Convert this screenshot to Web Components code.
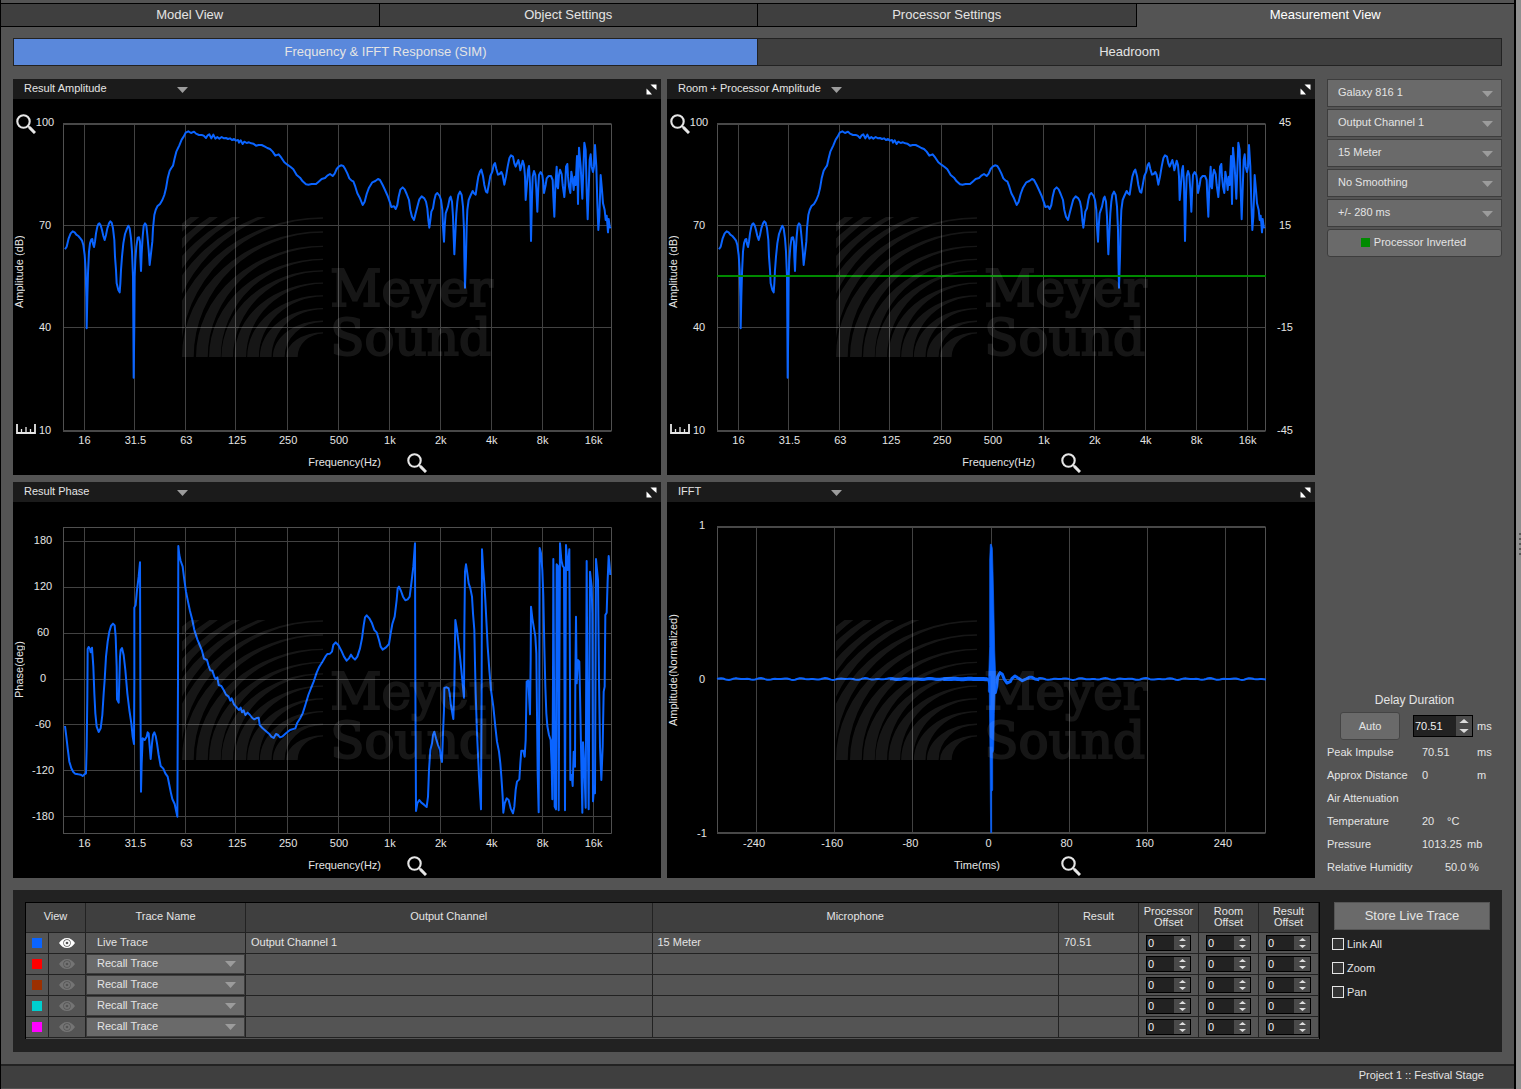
<!DOCTYPE html>
<html lang="en">
<head>
<meta charset="utf-8">
<title>Measurement View</title>
<style>
    html, body {
        margin: 0;
        height: 100%;
        background: #545454;
    }

    body {
        font: 11px/14px "Liberation Sans", Arial, sans-serif;
        color: #e4e4e4;
    }
</style>
</head>
<body>
<measurement-app></measurement-app>

<script>
const ICONS = {
    zoom: `<svg width="20" height="20" viewBox="0 0 20 20" fill="none" stroke="#e6e6e6">
        <circle cx="7.500" cy="7.500" r="6.200" stroke-width="2.100"/>
        <path d="M12 12L14 14" stroke-width="1.800"/><path d="M13.400 13.400L19 19" stroke-width="3"/></svg>`,
    ruler: `<svg width="20" height="10" viewBox="0 0 20 10" fill="none" stroke="#e6e6e6">
        <path d="M1 0V9H19V0" stroke-width="1.800"/><path d="M5.500 5V9M10 3V9M14.500 5V9" stroke-width="1.300"/></svg>`,
    expand: `<svg width="11" height="11" viewBox="0 0 11 11" fill="#fff">
        <path d="M4.500 .5H10.500V6L8.500 4.300L6.800 2.800Z"/><path d="M.5 4.500V10.500H6L4.300 8.500L2.800 6.800Z"/></svg>`,
    eye: `<svg width="16" height="10" viewBox="0 0 16 10">
        <path fill="currentColor" fill-rule="evenodd" d="M0 5C2 2 4.600 0 8 0S14 2 16 5C14 8 11.400 10 8 10S2 8 0 5ZM8 1.300A3.700 3.700 0 1 0 8 8.700A3.700 3.700 0 1 0 8 1.300Z"/>
        <circle cx="8" cy="5" r="2.200" fill="none" stroke="currentColor" stroke-width="1.700"/></svg>`
};

// Traces are stored at three units per pixel, in two halves joined at x = split
const AMPLITUDE = {
    split: 990,
    left: `195,538 200,530 206,505 212,490 218,484 224,487 229,494 235,498 241,505 246,512 250,525 254,555 257,600 259,680 260,775
        262,680 264,610 267,545 270,520 274,508 277,507 279,522 282,531 285,515 288,490 292,470 295,462 298,460 302,466 306,480
        310,498 314,510 318,495 322,475 327,460 331,454 335,458 339,475 343,510 345,560 348,600 350,640 355,660 359,667 361,640
        363,600 366,560 370,520 375,492 381,476 385,467 389,475 393,505 396,545 399,620 400,760 401,923 403,760 404,620 406,570
        409,530 413,503 417,502 420,515 421,560 423,603 425,550 428,500 431,468 435,460 439,466 442,495 446,540 449,585 453,550
        457,515 459,475 463,435 467,420 472,409 480,402 487,390 493,375 498,355 503,325 509,302 514,294 519,287 524,265 529,245
        538,226 545,209 551,200 557,188 565,184 573,189 582,185 588,191 597,195 605,195 611,197 618,204 623,196 628,193 634,205
        640,194 646,206 652,201 658,206 665,201 672,205 678,204 684,207 690,205 696,210 702,207 708,212 714,210 717,218 722,211
        728,222 733,215 740,219 747,217 754,220 760,221 768,227 776,225 785,225 795,230 802,234 810,237 818,245 826,257 836,253
        844,263 853,277 862,284 872,291 880,298 890,315 900,323 908,334 918,343 925,344 935,342 948,342 956,335 965,327 975,324
        982,317`,
    right: `0,312 8,318 14,311 20,297 26,290 33,286 40,288 46,298 52,310 58,325 65,332 70,334 76,350 82,370 90,385 98,405 104,395
        110,372 117,353 127,337 136,333 144,327 150,330 158,345 165,360 173,378 180,398 184,411 192,409 197,417 202,405 206,380
        211,359 218,352 224,358 230,372 237,390 241,420 246,440 252,450 257,430 262,410 268,388 275,379 283,385 288,395 292,415
        295,450 298,473 301,450 304,425 309,415 313,390 317,374 322,369 329,378 333,390 337,420 339,470 342,515 344,470 347,430
        354,410 359,385 362,380 366,395 369,440 371,500 373,553 376,490 379,430 382,395 385,375 390,365 395,375 399,410 402,480
        403,560 405,653 408,560 410,470 412,420 416,390 421,378 428,363 432,370 437,374 441,345 445,320 450,305 454,299 459,318
        463,345 468,365 472,368 477,340 481,318 487,305 491,285 495,279 499,297 504,314 509,312 514,306 518,315 523,344 528,320
        533,290 538,265 543,256 549,260 553,280 557,290 561,280 565,270 568,282 571,301 575,285 578,272 582,285 585,320 587,390
        591,340 594,300 597,288 600,340 603,513 606,380 608,320 612,303 616,315 619,360 622,425 625,350 627,315 632,306 637,315
        640,340 642,369 647,345 650,325 656,318 663,318 668,330 670,380 673,440 676,350 680,290 682,350 684,355 687,315 690,299
        695,312 698,345 703,381 706,340 708,290 712,282 714,320 717,350 721,369 724,305 728,330 731,360 734,320 737,345 741,258
        744,402 747,233 752,290 757,386 760,300 763,218 767,240 770,360 773,448 777,330 779,270 782,253 785,290 789,306 792,290
        795,225 799,290 802,400 805,480 808,440 810,380 812,315 816,360 819,400 824,420 827,450 830,437 832,460 834,487 836,447
        839,470 842,475`
};

const PHASE = {
    split: 990,
    left: `195,738 199,770 203,805 208,845 214,865 220,876 225,881 235,883 242,884 248,888 253,883 258,880 260,800 262,650 263,507
        266,501 270,507 272,517 276,503 280,560 283,640 286,700 290,740 296,756 302,745 307,705 311,640 314,600 318,530 323,485
        328,455 333,438 339,431 344,436 347,470 350,560 351,658 356,668 358,600 360,530 362,510 366,504 371,525 376,570 382,640
        388,690 394,730 398,770 402,792 403,600 403,383 407,375 411,330 416,290 420,247 421,600 423,935 425,850 428,775 434,780
        440,770 443,757 446,760 449,800 452,837 456,790 459,765 463,757 467,768 471,790 476,825 482,858 490,866 496,880 503,890
        508,915 513,940 517,957 524,972 532,1010 534,600 535,198 538,225 542,243 548,260 553,300 558,335 564,365 570,393 577,420
        583,450 592,478 599,495 606,512 612,536 621,540 626,558 631,571 637,572 643,590 647,597 652,592 656,615 664,618 671,630
        678,644 686,650 691,662 695,655 702,673 710,682 717,690 722,683 726,697 731,691 736,705 743,698 750,705 757,714 763,718
        770,714 776,713 779,735 788,745 800,755 808,762 814,770 821,774 828,762 834,765 840,772 848,769 858,760 870,750 886,745
        892,728 901,714 908,700 916,675 925,645 934,622 941,605 950,578 958,560 967,546 976,530 982,522`,
    right: `0,521 6,515 10,495 17,487 25,495 34,512 42,530 50,542 57,535 63,524 68,532 75,539 82,530 90,505 96,475 101,437 105,412
        110,406 118,415 126,430 133,450 140,457 147,480 152,500 158,509 168,502 177,492 182,460 187,432 194,410 200,360 203,325
        207,320 213,333 219,350 226,361 233,358 239,350 244,310 250,260 255,190 256,600 258,993 262,970 268,960 274,968 282,974
        290,981 294,950 297,870 301,810 306,790 309,765 313,755 318,775 324,795 330,810 333,835 336,846 339,760 342,690 343,624
        350,622 356,625 359,640 362,670 366,695 370,717 373,620 376,420 381,450 388,510 394,570 402,653 403,450 405,275 408,253
        412,280 416,310 421,325 426,350 429,400 433,450 435,550 437,640 441,760 447,890 453,988 455,600 456,208 459,260 463,310
        466,360 469,420 473,500 478,570 483,630 490,680 496,740 501,785 507,815 511,850 514,890 518,950 520,998 524,970 530,955
        536,960 542,985 549,1000 553,980 557,930 561,905 568,898 571,850 574,812 580,812 584,830 587,780 590,605 595,602 600,703
        602,540 603,380 607,415 612,445 616,470 619,520 621,700 623,880 626,997 628,600 629,204 633,220 637,270 640,350 643,500
        646,620 649,700 652,738 657,765 662,780 665,860 667,958 669,600 670,237 672,600 674,980 678,988 680,253 684,258 686,991
        690,190 694,240 698,258 702,263 705,991 708,195 713,270 718,208 720,600 721,900 725,885 728,918 731,815 735,860 736,600
        738,410 740,610 744,540 748,545 750,640 753,800 757,998 759,787 763,860 767,983 770,243 772,600 776,988 780,275 785,320
        787,400 789,964 792,920 795,940 798,237 804,300 807,600 810,800 814,900 818,800 821,635 824,620 826,405 830,398 833,300
        836,228 839,260 841,285`
};

const IMPULSE_TAIL = `145,597 158,640 166,638 170,620 173,590 180,578 187,583 193,598 201,609 211,605 216,595 225,588 234,594
    247,602 258,597 268,592 276,592 285,597 298,599`;
const IMPULSE_SPIKE = `146,592 149,500 149,240 151,193 154,193 157,205 159,275 161,360 164,510 167,590 168,630 165,640 163,700
    161,810 158,820 158,930 155,935 155,1058 152,1058 151,960 150,825 148,640 145,634`;

const OCTAVES = ["16", "31.5", "63", "125", "250", "500", "1k", "2k", "4k", "8k", "16k"];
const OCTAVE_LINES = [253.5, 403.5, 556.5, 706.5, 862.5, 1015.5, 1168.5, 1321.5, 1474.5, 1627.5, 1780.5];

function joinTrace(trace) {
    const right = trace.right.trim().split(/\s+/).map(pair => {
        const [x, y] = pair.split(",").map(Number);
        return (x + trace.split) + "," + y;
    });
    return `<polyline class="trace" points="${trace.left} ${right.join(" ")}"/>`;
}

function ripple(from, to, centre, size) {
    const points = [];
    for (let x = from; x <= to; x += 6)
        points.push(x + "," + (centre + size * Math.sin(x * .13) * Math.cos(x * .031)).toFixed(1));
    return points.join(" ");
}

const CHARTS = {
    amplitude: {
        title: "Result Amplitude", origin: [189, 159], top: 162, bottom: 1083, frame: 2,
        cols: OCTAVE_LINES, rows: [466.5, 772.5], xLabels: OCTAVES, yLabels: ["100", "70", "40", "10"],
        xTitle: "Frequency(Hz)", yTitle: "Amplitude (dB)", tools: true,
        traces: joinTrace(AMPLITUDE)
    },
    room: {
        title: "Room + Processor Amplitude", origin: [189, 159], top: 162, bottom: 1083, frame: 2,
        cols: OCTAVE_LINES, rows: [466.5, 772.5], xLabels: OCTAVES, yLabels: ["100", "70", "40", "10"],
        rightLabels: ["45", "15", "-15", "-45"],
        xTitle: "Frequency(Hz)", yTitle: "Amplitude (dB)", tools: true,
        traces: joinTrace(AMPLITUDE) + `<path class="trace processor" d="M189 618H1836"/>`
    },
    phase: {
        title: "Result Phase", origin: [189, 138], top: 142.5, bottom: 1060.5, frame: 1,
        cols: OCTAVE_LINES, rows: [184.5, 322.5, 460.5, 598.5, 733.5, 871.5, 1009.5], xLabels: OCTAVES,
        yLabels: ["180", "120", "60", "0", "-60", "-120", "-180"],
        xTitle: "Frequency(Hz)", yTitle: "Phase(deg)",
        traces: joinTrace(PHASE)
    },
    ifft: {
        title: "IFFT", origin: [171, 138], top: 141, bottom: 1059, frame: 2,
        cols: [289.5, 523.5, 757.5, 994.5, 1228.5, 1462.5, 1696.5], rows: [598.5],
        xLabels: ["-240", "-160", "-80", "0", "80", "160", "240"], yLabels: ["1", "0", "-1"],
        xTitle: "Time(ms)", yTitle: "Amplitude(Normalized)",
        traces: `<polyline class="trace" points="${ripple(171, 990, 597, 3)}"/>
            <polyline class="trace medium" points="${ripple(690, 985, 597, 1)}"/>
            <polyline class="trace dense" points="${ripple(850, 985, 597, 1)}"/>
            <g transform="translate(840)">
                <polyline class="trace medium" points="${IMPULSE_TAIL}"/>
                <polyline class="trace" points="${ripple(294, 978, 597, 3)}"/>
                <polygon class="spike" points="${IMPULSE_SPIKE}"/>
            </g>`
    }
};

class DropDown extends HTMLElement {
    constructor() {
        super();
        this.attachShadow({ mode: "open" });
        this.shadowRoot.innerHTML = /*html*/`
        <style>
            :host {
                display: grid;
                align-items: center;
                box-sizing: border-box;
                height: 28px;
                border: 1px solid #3d3d3d;
                background: #6a6a6a;
            }

            :host([plain]) {
                height: 20px;
                border: none;
                background: none;
            }

            :host([compact]) {
                height: 20px;
            }

            select {
                grid-area: 1 / 1;
                appearance: none;
                width: 100%;
                height: 100%;
                padding: 0 24px 2px 10px;
                border: none;
                background: none;
                color: inherit;
                font: inherit;
            }

            :host([plain]) select {
                padding-left: 11px;
            }

            svg {
                grid-area: 1 / 1;
                justify-self: end;
                margin: 2px 8px 0 0;
                pointer-events: none;
            }

            :host([compact]) svg {
                margin-top: 0;
            }
        </style>
        <select></select>
        <svg width="11" height="6" viewBox="0 0 11 6"><path d="M0 0H11L5.500 6Z" fill="#9c9c9c"/></svg>
        `;
    }

    connectedCallback() {
        const select = this.shadowRoot.querySelector("select");
        select.setAttribute("aria-label", this.getAttribute("label") || this.getAttribute("value"));
        select.add(new Option(this.getAttribute("value")));
    }
}

class SpinBox extends HTMLElement {
    constructor() {
        super();
        this.attachShadow({ mode: "open" });
        this.shadowRoot.innerHTML = /*html*/`
        <style>
            :host {
                display: inline-flex;
                box-sizing: border-box;
                width: 45px;
                height: 16px;
                border: 1px solid #000;
                background: #222;
                vertical-align: middle;
            }

            :host([large]) {
                width: 60px;
                height: 22px;
            }

            input {
                flex: 1;
                min-width: 0;
                padding: 0 0 0 1px;
                border: none;
                background: none;
                color: #f0f0f0;
                font: inherit;
                line-height: 14px;
                appearance: textfield;
            }

            input::-webkit-inner-spin-button {
                display: none;
            }

            .steps {
                display: flex;
                flex-direction: column;
                width: 16px;
                background: #4a4a4a;
            }

            button {
                flex: 1;
                display: flex;
                align-items: center;
                justify-content: center;
                min-height: 0;
                padding: 0;
                border: none;
                background: none;
            }
        </style>
        <input type="number" step="any">
        <div class="steps">
            <button class="up" aria-label="Increase"><svg width="7" height="3" viewBox="0 0 7 3"><path d="M0 3L3.500 0L7 3Z" fill="#ddd"/></svg></button>
            <button class="down" aria-label="Decrease"><svg width="7" height="3" viewBox="0 0 7 3"><path d="M0 0L3.500 3L7 0Z" fill="#ddd"/></svg></button>
        </div>
        `;
    }

    connectedCallback() {
        const input = this.shadowRoot.querySelector("input");
        input.value = this.getAttribute("value");
        input.setAttribute("aria-label", this.getAttribute("label"));
        if (this.hasAttribute("large"))
            this.shadowRoot.querySelectorAll("svg").forEach(svg => {
                svg.setAttribute("width", 10);
                svg.setAttribute("height", 4);
            });
        this.shadowRoot.querySelector(".up").addEventListener("click", () => input.value = Number(input.value) + 1);
        this.shadowRoot.querySelector(".down").addEventListener("click", () => input.value = Number(input.value) - 1);
    }
}

class BrandWatermark extends HTMLElement {
    constructor() {
        super();
        this.attachShadow({ mode: "open" });
        // each crescent: outer rx, outer ry; the inner edge is narrower at the foot than at the tip
        const rings = [[111, 74], [150, 109], [189, 147], [227, 185], [265, 223], [304, 260], [341, 294], [380, 333],
            [422, 376], [461, 418], [500, 455], [540, 485], [580, 517], [620, 545]];
        const arcs = rings.map(([rx, ry]) =>
            `M${965 - rx} 860A${rx} ${ry} 0 0 1 965 ${860 - ry}V${864 - ry}A${rx - 35} ${ry - 4} 0 0 0 ${1000 - rx} 860Z`);
        this.shadowRoot.innerHTML = /*html*/`
        <style>
            :host {
                display: flex;
                align-items: flex-end;
                gap: 7px;
                color: #fff;
                opacity: .085;
                font: 50px/49px "DejaVu Serif", serif;
            }

            div {
                margin-bottom: -6px;
                -webkit-text-stroke: 2px #fff;
            }
        </style>
        <svg width="141" height="140" viewBox="543 441 422 419"><path fill="currentColor" d="${arcs.join("")}"/></svg>
        <div>Meyer<br>Sound</div>
        `;
    }
}

class ChartPanel extends HTMLElement {
    constructor() {
        super();
        this.attachShadow({ mode: "open" });
    }

    connectedCallback() {
        const chart = CHARTS[this.getAttribute("kind")];
        const [left, top] = chart.origin;
        const right = left + 1645.5;
        const spans = labels => labels.map(text => `<span>${text}</span>`).join("");
        const cols = chart.cols.map(x => `M${x} ${chart.top}V${chart.bottom}`).join("");
        const rows = chart.rows.map(y => `M${left} ${y}H${right}`).join("");

        this.shadowRoot.innerHTML = /*html*/`
        <style>
            :host {
                display: flex;
                flex-direction: column;
                min-width: 0;
                background: #000;
            }

            header {
                display: flex;
                align-items: center;
                justify-content: space-between;
                height: 20px;
                padding-right: 4px;
                background: #1b1b1b;
            }

            drop-down {
                width: 183px;
            }

            button {
                display: flex;
                padding: 0;
                border: none;
                background: none;
            }

            .body {
                flex: 1;
                display: grid;
                grid-template-columns: 24px 26px 1fr 49px;
                grid-template-rows: 1fr auto auto;
                padding: 24px 0 2px;
            }

            .tools {
                display: flex;
                flex-direction: column;
                margin: -9px 0 -3px;
                padding-left: 3px;
            }

            .tools h3 {
                flex: 1;
                align-self: flex-start;
                margin: 0 0 14px -4px;
                font: inherit;
                text-align: center;
                writing-mode: vertical-rl;
                transform: rotate(180deg);
            }

            .scale {
                display: flex;
                flex-direction: column;
                justify-content: space-between;
                align-items: center;
                width: 16px;
                margin: -8px 0 -6px;
                white-space: nowrap;
            }

            .scale span {
                display: flex;
                justify-content: center;
                width: 0;
            }

            :host([kind=phase]) .scale {
                width: 12px;
                margin: 7px 0 11px;
            }

            :host([kind=ifft]) .scale {
                width: 22px;
            }

            .scale.right {
                width: 38px;
            }

            .plot {
                position: relative;
                min-height: 200px;
            }

            .plot svg {
                position: absolute;
                width: 100%;
                height: 100%;
                overflow: visible;
            }

            .plot path, .plot polyline {
                fill: none;
                vector-effect: non-scaling-stroke;
            }

            .grid {
                stroke: #424242;
            }

            .frame {
                stroke: #505050;
            }

            .thick {
                stroke-width: 2px;
                stroke: #484848;
            }

            .trace {
                stroke: #0a64ff;
                stroke-width: 2px;
                stroke-linejoin: round;
            }

            .processor {
                stroke: #008a00;
            }

            .medium {
                stroke-width: 3px;
            }

            .dense {
                stroke-width: 4px;
            }

            .spike {
                fill: #0a64ff;
                stroke: #0a64ff;
                stroke-width: 2px;
            }

            .mark {
                position: absolute;
                inset: 20px 0 0;
                display: flex;
                align-items: center;
                justify-content: center;
                overflow: hidden;
                pointer-events: none;
            }

            .marks {
                grid-column: 3;
                display: grid;
                grid-template-columns: repeat(${chart.xLabels.length}, 1fr);
                margin: 2px -7px 0 -4px;
                text-align: center;
            }

            :host([kind=ifft]) .marks {
                margin: 2px 4px 0 -2px;
            }

            .caption {
                grid-column: 3;
                display: grid;
                grid-template-columns: 1fr 205px;
                align-items: center;
                margin-top: 6px;
            }

            .caption h3 {
                justify-self: end;
                margin: 0 26px 2px 0;
                font: inherit;
            }

            :host([kind=ifft]) .caption h3 {
                margin-right: 61px;
            }
        </style>
        <header>
            <drop-down plain value="${chart.title}" label="Chart"></drop-down>
            <button aria-label="Expand chart">${ICONS.expand}</button>
        </header>
        <div class="body">
            <div class="tools">
                ${chart.tools ? `<button aria-label="Zoom amplitude">${ICONS.zoom}</button>` : ""}
                <h3>${chart.yTitle}</h3>
                ${chart.tools ? `<button aria-label="Amplitude scale">${ICONS.ruler}</button>` : ""}
            </div>
            <div class="scale">${spans(chart.yLabels)}</div>
            <div class="plot">
                <svg viewBox="${left} ${top} 1647 924" preserveAspectRatio="none">
                    <path class="grid" d="${cols}${rows}"/>
                    <path class="frame" d="M${left + 1.5} ${chart.top}V${chart.bottom}M${right} ${chart.top}V${chart.bottom}"/>
                    <path class="frame ${chart.frame == 2 ? "thick" : ""}" d="M${left} ${chart.top}H${right}M${left} ${chart.bottom}H${right}"/>
                    ${chart.traces}
                </svg>
                <div class="mark"><brand-watermark></brand-watermark></div>
            </div>
            <div class="scale right">${spans(chart.rightLabels || [])}</div>
            <div class="marks">${spans(chart.xLabels)}</div>
            <div class="caption">
                <h3>${chart.xTitle}</h3>
                <button aria-label="Zoom horizontal axis">${ICONS.zoom}</button>
            </div>
        </div>
        `;
    }
}

class TabBar extends HTMLElement {
    constructor() {
        super();
        this.attachShadow({ mode: "open" });
        this.shadowRoot.innerHTML = /*html*/`
        <style>
            :host {
                display: flex;
            }

            ::slotted(button) {
                flex: 1;
                height: 24px;
                padding: 0;
                border: solid #000;
                border-width: 1px 1px 1px 0;
                background: #3f3f3f;
                color: inherit;
                font: inherit;
                font-size: 13px;
            }

            ::slotted(button[aria-selected=true]) {
                border-right-width: 0;
                border-bottom-color: transparent;
                background: none;
                color: #fff;
            }

            :host([kind=sub]) ::slotted(button) {
                height: 28px;
                border-color: #222;
            }

            :host([kind=sub]) ::slotted(button[aria-selected=true]) {
                border-width: 1px;
                background: #5a88db;
                color: inherit;
            }
        </style>
        <slot></slot>
        `;
    }

    connectedCallback() {
        this.setAttribute("role", "tablist");
    }
}

class DelayPanel extends HTMLElement {
    constructor() {
        super();
        this.attachShadow({ mode: "open" });
        this.shadowRoot.innerHTML = /*html*/`
        <style>
            :host {
                display: block;
            }

            h2 {
                margin: 0 0 4px;
                font: 12px/16px "Liberation Sans", Arial, sans-serif;
                text-align: center;
            }

            .delay {
                display: flex;
                align-items: center;
                height: 28px;
                padding-left: 13px;
            }

            .delay button {
                width: 60px;
                height: 28px;
                margin-right: 13px;
                border: 1px solid #444;
                border-radius: 3px;
                background: #6a6a6a;
                color: inherit;
                font: inherit;
            }

            .delay spin-box {
                margin-right: 4px;
            }

            dl {
                margin: 0;
            }

            dl div {
                display: grid;
                grid-template-columns: 95px 55px 1fr;
                align-items: center;
                height: 23px;
            }

            dd {
                margin: 0;
            }

            .temperature {
                grid-template-columns: 95px 25px 1fr;
            }

            .pressure {
                grid-template-columns: 95px 45px 1fr;
            }

            .humidity {
                grid-template-columns: 118px 24px 1fr;
            }
        </style>
        <h2>Delay Duration</h2>
        <div class="delay"><button>Auto</button><spin-box large value="70.51" label="Delay duration"></spin-box><span>ms</span></div>
        <dl>
            <div><dt>Peak Impulse</dt><dd>70.51</dd><dd>ms</dd></div>
            <div><dt>Approx Distance</dt><dd>0</dd><dd>m</dd></div>
            <div><dt>Air Attenuation</dt></div>
            <div class="temperature"><dt>Temperature</dt><dd>20</dd><dd>°C</dd></div>
            <div class="pressure"><dt>Pressure</dt><dd>1013.25</dd><dd>mb</dd></div>
            <div class="humidity"><dt>Relative Humidity</dt><dd>50.0</dd><dd>%</dd></div>
        </dl>
        `;
    }
}

class TraceTable extends HTMLElement {
    constructor() {
        super();
        this.attachShadow({ mode: "open" });
        const colours = ["#0a64ff", "#ff0000", "#9c3000", "#00cfcf", "#ff00ff"];
        const rows = colours.map((colour, i) => `
            <tr>
                <td class="centre"><i style="background: ${colour}"></i></td>
                <td class="centre"><button class="${i ? "" : "on"}" aria-label="Show trace ${i + 1}">${ICONS.eye}</button></td>
                <td class="${i ? "recall" : "name"}">${i ? `<drop-down compact value="Recall Trace"></drop-down>` : "Live Trace"}</td>
                <td>${i ? "" : "Output Channel 1"}</td>
                <td>${i ? "" : "15 Meter"}</td>
                <td>${i ? "" : "70.51"}</td>
                ${["Processor", "Room", "Result"].map(name =>
                    `<td class="centre"><spin-box value="0" label="${name} offset ${i + 1}"></spin-box></td>`).join("")}
            </tr>`).join("");

        this.shadowRoot.innerHTML = /*html*/`
        <style>
            :host {
                display: block;
                border: solid #000;
                border-width: 1px 1px 0;
            }

            table {
                width: 100%;
                table-layout: fixed;
                border-spacing: 0;
                border-bottom: 1px solid #545454;
            }

            th, td {
                box-sizing: border-box;
                padding: 0 5px 2px;
                border: solid #222;
                border-width: 0 1px 1px 0;
                background: #545454;
                font-weight: normal;
                text-align: left;
            }

            th {
                height: 30px;
                padding: 0 0 2px;
                background: #3f3f3f;
                line-height: 11px;
                text-align: center;
            }

            td {
                height: 21px;
                line-height: 16px;
            }

            .centre {
                padding: 0;
                line-height: 0;
                text-align: center;
            }

            td.name {
                padding-left: 11px;
            }

            .recall {
                padding: 0;
            }

            i {
                display: inline-block;
                width: 10px;
                height: 10px;
            }

            button {
                padding: 0;
                border: none;
                background: none;
                color: #747474;
                line-height: 0;
            }

            .on {
                color: #fff;
            }
        </style>
        <table>
            <colgroup>
                <col style="width: 23px"><col style="width: 37px"><col style="width: 160px"><col><col>
                <col style="width: 80px"><col style="width: 60px"><col style="width: 60px"><col style="width: 60px">
            </colgroup>
            <thead>
                <tr>
                    <th colspan="2">View</th><th>Trace Name</th><th>Output Channel</th><th>Microphone</th><th>Result</th>
                    <th>Processor<br>Offset</th><th>Room<br>Offset</th><th>Result<br>Offset</th>
                </tr>
            </thead>
            <tbody>${rows}</tbody>
        </table>
        `;
    }
}

class MeasurementApp extends HTMLElement {
    constructor() {
        super();
        this.attachShadow({ mode: "open" });
        this.shadowRoot.innerHTML = /*html*/`
        <style>
            :host {
                display: flex;
                min-height: 100vh;
            }

            .window {
                flex: 1;
                display: flex;
                flex-direction: column;
                min-width: 0;
                box-sizing: border-box;
                border-left: 1px solid #000;
                padding-top: 3px;
            }

            main {
                flex: 1;
                display: flex;
                flex-direction: column;
                padding: 11px 12px 12px;
            }

            .work {
                flex: 1;
                display: grid;
                grid-template-columns: 1fr 175px;
                gap: 12px;
                margin: 13px 0 12px;
            }

            .charts {
                display: grid;
                grid-template: 1fr 1fr / 1fr 1fr;
                gap: 7px 6px;
                min-width: 0;
            }

            aside {
                display: flex;
                flex-direction: column;
                gap: 2px;
            }

            .inverted {
                display: flex;
                align-items: center;
                justify-content: center;
                gap: 4px;
                height: 28px;
                padding: 0 2px 2px 0;
                border: 1px solid #3d3d3d;
                border-radius: 3px;
                background: #6a6a6a;
                color: inherit;
                font: inherit;
            }

            .inverted i {
                width: 9px;
                height: 9px;
                background: #008a00;
            }

            delay-panel {
                margin-top: auto;
            }

            .traces {
                display: grid;
                grid-template-columns: 1fr 158px;
                gap: 12px;
                padding: 12px 12px 13px;
                background: #222;
            }

            .options {
                display: flex;
                flex-direction: column;
                gap: 10px;
            }

            .store {
                height: 28px;
                margin: 0 0 -3px 2px;
                border: 1px solid #555;
                background: #6a6a6a;
                color: inherit;
                font: inherit;
                font-size: 13px;
            }

            label {
                display: flex;
                align-items: center;
                gap: 3px;
                height: 14px;
            }

            input {
                appearance: none;
                box-sizing: border-box;
                width: 12px;
                height: 12px;
                margin: 0;
                border: 1px solid #e4e4e4;
                background: #333;
            }

            input:checked {
                background: #5a88db;
            }

            footer {
                box-sizing: border-box;
                height: 25px;
                padding: 2px 30px 0;
                border-top: 2px solid #222;
                border-bottom: 1px solid #545454;
                background: #3f3f3f;
                text-align: right;
            }

            .splitter {
                display: flex;
                align-items: center;
                justify-content: flex-end;
                width: 5px;
                border-left: 2px solid #000;
                background: #8f8f8f;
            }
        </style>
        <div class="window">
            <tab-bar>
                <button role="tab">Model View</button>
                <button role="tab">Object Settings</button>
                <button role="tab">Processor Settings</button>
                <button role="tab" aria-selected="true">Measurement View</button>
            </tab-bar>
            <main>
                <tab-bar kind="sub">
                    <button role="tab" aria-selected="true">Frequency &amp; IFFT Response (SIM)</button>
                    <button role="tab">Headroom</button>
                </tab-bar>
                <div class="work">
                    <section class="charts">
                        <chart-panel kind="amplitude"></chart-panel>
                        <chart-panel kind="room"></chart-panel>
                        <chart-panel kind="phase"></chart-panel>
                        <chart-panel kind="ifft"></chart-panel>
                    </section>
                    <aside>
                        <drop-down value="Galaxy 816 1" label="Processor"></drop-down>
                        <drop-down value="Output Channel 1" label="Output channel"></drop-down>
                        <drop-down value="15 Meter" label="Microphone"></drop-down>
                        <drop-down value="No Smoothing" label="Smoothing"></drop-down>
                        <drop-down value="+/- 280 ms" label="Time window"></drop-down>
                        <button class="inverted"><i></i>Processor Inverted</button>
                        <delay-panel></delay-panel>
                    </aside>
                </div>
                <section class="traces">
                    <trace-table></trace-table>
                    <div class="options">
                        <button class="store">Store Live Trace</button>
                        <label><input type="checkbox">Link All</label>
                        <label><input type="checkbox">Zoom</label>
                        <label><input type="checkbox">Pan</label>
                    </div>
                </section>
            </main>
            <footer>Project 1 :: Festival Stage</footer>
        </div>
        <div class="splitter">
            <svg width="2" height="24" viewBox="0 0 2 24"><path d="M1 0V24" stroke="#555" stroke-width="2" stroke-dasharray="2 3"/></svg>
        </div>
        `;
    }
}

customElements.define("drop-down", DropDown);
customElements.define("spin-box", SpinBox);
customElements.define("brand-watermark", BrandWatermark);
customElements.define("chart-panel", ChartPanel);
customElements.define("tab-bar", TabBar);
customElements.define("delay-panel", DelayPanel);
customElements.define("trace-table", TraceTable);
customElements.define("measurement-app", MeasurementApp);
</script>
</body>
</html>
